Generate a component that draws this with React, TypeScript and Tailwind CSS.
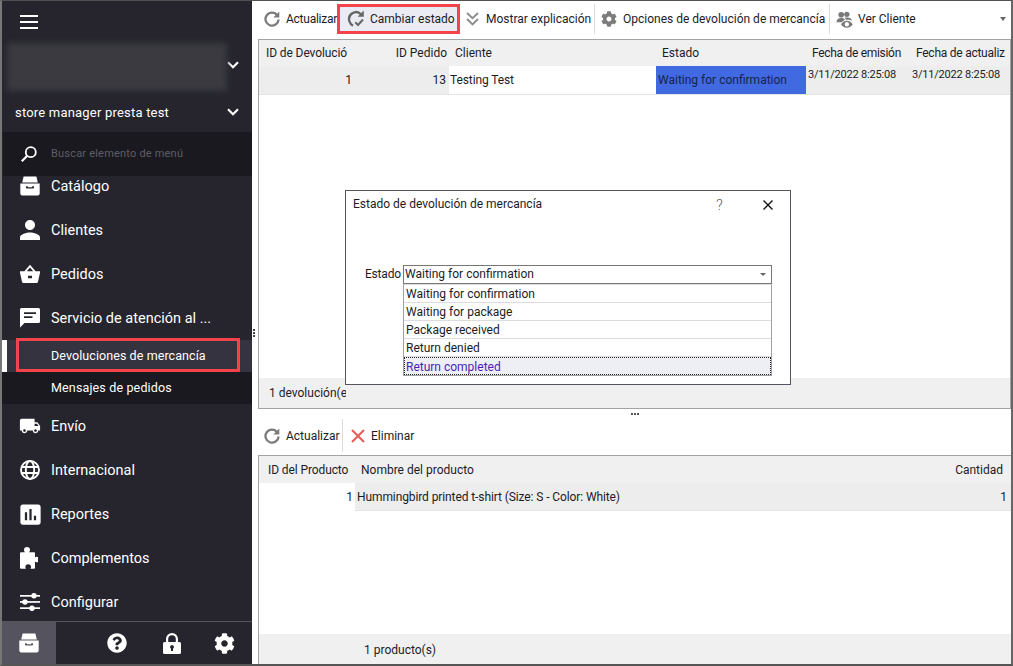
import React from "react";
import { MdPerson, MdLocalShipping, MdAssessment } from "react-icons/md";
import { FaCog, FaQuestionCircle } from "react-icons/fa";

const Archive = ({ className = "" }: { className?: string }) => (
  <svg viewBox="0 0 20 20" className={className} fill="currentColor">
    <path d="M3.600 0.600h12.800l1.400 6H2.200z" />
    <path fillRule="evenodd" d="M0.300 7.600h19.400v10a2 2 0 0 1-2 2H2.300a2 2 0 0 1-2-2zM6 10.200v1.400a1 1 0 0 0 1 1h6a1 1 0 0 0 1-1v-1.400h-1.800v1H7.800v-1z" />
  </svg>
);
const Basket = ({ className = "" }: { className?: string }) => (
  <svg viewBox="0 0 20 20" className={className} fill="currentColor">
    <path fillRule="evenodd" d="M10 0.800 L15.600 7.200H20v1.600l-2 9a1.600 1.600 0 0 1-1.600 1.200H3.600A1.600 1.600 0 0 1 2 17.800l-2-9V7.200h4.400zM6.800 7.200h6.400L10 3.400zM8 11.800v2.400h4v-2.400z" />
  </svg>
);
const Chat = ({ className = "" }: { className?: string }) => (
  <svg viewBox="0 0 20 20" className={className} fill="currentColor">
    <path fillRule="evenodd" d="M1.500 0h17A1.500 1.500 0 0 1 20 1.500v12a1.500 1.500 0 0 1-1.500 1.500H4.500L0 19.500V1.500A1.500 1.500 0 0 1 1.500 0zM4 4.200v1.800h12V4.200zM4 8.200V10h8.500V8.200z" />
  </svg>
);
const Globe = ({ className = "" }: { className?: string }) => (
  <svg viewBox="0 0 20 20" className={className} fill="none" stroke="currentColor" strokeWidth="1.900">
    <circle cx="10" cy="10" r="9" />
    <ellipse cx="10" cy="10" rx="4.200" ry="9" />
    <path d="M1.500 7h17M1.500 13h17" />
  </svg>
);
const Puzzle = ({ className = "" }: { className?: string }) => (
  <svg viewBox="0 0 18 22" className={className} fill="currentColor">
    <path d="M7 0a3 3 0 0 1 3 3c0 1-.500 1.600-1 2.200h5a1 1 0 0 1 1 1v4.300c.400-.400 1-.800 1.500-.800a2.500 2.500 0 0 1 0 5.600c-.500 0-1.100-.400-1.500-.800v6.300a1 1 0 0 1-1 1h-3.600c.400-.500.600-1.100.600-1.800a2.800 2.800 0 0 0-5.600 0c0 .700.200 1.300.600 1.800H1a1 1 0 0 1-1-1V6.200a1 1 0 0 1 1-1h4c-.500-.600-1-1.200-1-2.200a3 3 0 0 1 3-3z" />
  </svg>
);
const Sliders = ({ className = "" }: { className?: string }) => (
  <svg viewBox="0 0 20 20" className={className} fill="currentColor">
    <rect x="0" y="3" width="20" height="1.700" />
    <rect x="0" y="9.100" width="20" height="1.700" />
    <rect x="0" y="15.300" width="20" height="1.700" />
    <circle cx="14" cy="3.800" r="2.700" />
    <circle cx="5" cy="10" r="2.700" />
    <circle cx="12" cy="16.200" r="2.700" />
  </svg>
);
const Lock = ({ className = "" }: { className?: string }) => (
  <svg viewBox="0 0 18 21" className={className} fill="currentColor">
    <path fillRule="evenodd" d="M9 0a6 6 0 0 1 6 6v3h1.500A1.500 1.500 0 0 1 18 10.500v9a1.500 1.500 0 0 1-1.500 1.500h-15A1.500 1.500 0 0 1 0 19.500v-9A1.500 1.500 0 0 1 1.500 9H3V6a6 6 0 0 1 6-6zm0 2.200A3.800 3.800 0 0 0 5.200 6v3h7.600V6A3.800 3.800 0 0 0 9 2.200zM9 12a2 2 0 0 0-1 3.700V18h2v-2.300A2 2 0 0 0 9 12z" />
  </svg>
);
const Hamburger = () => (
  <svg viewBox="0 0 18 14" className="w-[18px] h-[14px]" fill="currentColor">
    <rect y="0" width="18" height="2" />
    <rect y="6" width="18" height="2" />
    <rect y="12" width="18" height="2" />
  </svg>
);
const Chevron = () => (
  <svg viewBox="0 0 12 8" className="w-3 h-2" fill="none" stroke="currentColor" strokeWidth="2.200">
    <path d="M1 1.200l5 5 5-5" />
  </svg>
);
const Search = () => (
  <svg viewBox="0 0 16 16" className="w-4 h-4" fill="none" stroke="currentColor" strokeWidth="1.800">
    <circle cx="9.800" cy="6.200" r="5" />
    <path d="M6 10L.8 15.200" strokeWidth="2.200" />
  </svg>
);
const Refresh = ({ className = "" }: { className?: string }) => (
  <svg viewBox="0 0 16 16" className={className} fill="none" stroke="#7c7c7c" strokeWidth="2.300">
    <path d="M13.200 4.200A6.500 6.500 0 1 0 14.500 8.500" />
    <path d="M15.300 0.600v6H9.300z" fill="#7c7c7c" stroke="none" />
  </svg>
);
const RefreshCheck = () => (
  <svg viewBox="0 0 18 18" className="w-[18px] h-[18px]" fill="none" stroke="#666" strokeWidth="2.300">
    <path d="M14 4.200A7 7 0 0 0 2.500 11.500 7 7 0 0 0 6 15.700" />
    <path d="M16.800 .6v6.200h-6.200z" fill="#666" stroke="none" />
    <path d="M8.300 12.300l2.700 2.700 5-5.500" strokeWidth="2" />
  </svg>
);
const DoubleDown = () => (
  <svg viewBox="0 0 13 14" className="w-[13px] h-[14px]" fill="none" stroke="#8c8c8c" strokeWidth="1.900">
    <path d="M1 1l5.500 5.200L12 1M1 7l5.500 5.500L12 7" />
  </svg>
);
const ViewUsers = () => (
  <svg viewBox="0 0 18 18" className="w-[17px] h-[17px]" fill="#7a7a7a">
    <circle cx="5.500" cy="4" r="3" />
    <circle cx="11.500" cy="3.500" r="2.800" />
    <path d="M0.500 12c0-3 2-4.500 5-4.500 1.500 0 3 .5 4 1.500l-3.500 3z" />
    <path d="M9 7h3c3 0 4.500 1.500 5 3.500-1.500-1-4-1.500-6-1z" />
    <path fillRule="evenodd" d="M11.500 10.200c2.800 0 5 1.700 6.200 3.800-1.200 2.100-3.400 3.800-6.200 3.800S6.500 16.100 5.300 14c1.200-2.100 3.400-3.800 6.200-3.800zm0 1.500a2.300 2.300 0 1 0 0 4.600 2.300 2.300 0 0 0 0-4.600z" />
  </svg>
);
const RedX = () => (
  <svg viewBox="0 0 14 14" className="w-[14px] h-[14px]" fill="none" stroke="#e8605a" strokeWidth="2.200">
    <path d="M1 1l12 12M13 1L1 13" />
  </svg>
);

const items = [
  { label: "Catálogo", Icon: Archive, size: "w-5 h-5", first: true },
  { label: "Clientes", Icon: MdPerson, size: "w-[30px] h-[30px] -mx-[5px]" },
  { label: "Pedidos", Icon: Basket, size: "w-5 h-5" },
  { label: "Servicio de atención al ...", Icon: Chat, size: "w-5 h-5" },
];
const items2 = [
  { label: "Envío", Icon: MdLocalShipping, size: "w-[22px] h-[22px] -mx-[1px]" },
  { label: "Internacional", Icon: Globe, size: "w-5 h-5" },
  { label: "Reportes", Icon: MdAssessment, size: "w-[27px] h-[27px] -mx-[3px]" },
  { label: "Complementos", Icon: Puzzle, size: "w-[18px] h-[22px]" },
  { label: "Configurar", Icon: Sliders, size: "w-5 h-5" },
];

function MenuItem({ label, Icon, size, first }: { label: string; Icon: any; size: string; first?: boolean }) {
  return (
    <div className={`h-[44px] shrink-0 flex items-center pl-[18px] text-[14.5px] text-white ${first ? "-mt-[12px]" : ""}`}>
      <span className="w-[31px] flex items-center">
        <Icon className={size} />
      </span>
      <span className="pt-[2px]">{label}</span>
    </div>
  );
}

export default function App() {
  return (
    <div
      className="relative w-[1013px] h-[666px] overflow-hidden bg-white border-t border-t-[#505050] border-l-2 border-l-[#777] border-r-2 border-r-[#666] border-b-2 border-b-[#555] flex text-[12px] text-[#1c1c28]"
      style={{ fontFamily: "Roboto, sans-serif" }}
    >
      {/* Sidebar */}
      <aside className="w-[250px] shrink-0 bg-[#26252e] text-white flex flex-col">
        <div className="h-[42px] shrink-0 flex items-center pl-[18px]">
          <Hamburger />
        </div>
        <div className="h-[48px] shrink-0 flex pl-[5px]">
          <div className="w-[221px] h-full bg-[#3a3a40] blur-[3px]" />
          <div className="ml-auto mr-[13px] mt-[18px] text-white">
            <Chevron />
          </div>
        </div>
        <div className="h-[41px] shrink-0 flex items-center pl-[13px] pr-[13px] text-[13px] tracking-[0.2px] text-white justify-between">
          <span className="pt-[3px]">store manager presta test</span>
          <Chevron />
        </div>
        <div className="h-[44px] shrink-0 bg-[#1a1920] ml-[1px] flex items-center pl-[18px] z-10">
          <Search />
          <span className="ml-[14px] text-[11px] tracking-[0.2px] text-[#5e5d64]">Buscar elemento de menú</span>
        </div>
        <div className="flex-1 min-h-0 overflow-hidden flex flex-col">
          {items.map((it) => (
            <MenuItem key={it.label} {...it} />
          ))}
          <div className="h-[32px] shrink-0 bg-[#34333f] flex items-center text-[12.5px] tracking-[0.08px] relative">
            <span className="w-[5px] h-full bg-white" />
            <span className="ml-[44px]">Devoluciones de mercancía</span>
            <span className="absolute left-[14px] -top-[2px] w-[224px] h-[34px] border-[3px] border-[#f5434b]" />
          </div>
          <div className="h-[32px] shrink-0 bg-[#1a1920] flex items-center pl-[49px] text-[12.5px] tracking-[0.15px]">Mensajes de pedidos</div>
          {items2.map((it) => (
            <MenuItem key={it.label} {...it} />
          ))}
        </div>
        <div className="h-[43px] shrink-0 border-t border-[#55545c] flex items-center text-white">
          <div className="w-[54px] h-full bg-[#55545e] flex items-center justify-center">
            <Archive className="w-5 h-5" />
          </div>
          <FaQuestionCircle className="ml-[51px] w-5 h-5" />
          <Lock className="ml-[36px] w-[18px] h-[21px]" />
          <FaCog className="ml-[33px] w-[21px] h-[21px]" />
        </div>
      </aside>

      {/* Main */}
      <main className="flex-1 min-w-0 flex flex-col relative">
        <div className="absolute left-[1px] top-[328px] flex flex-col gap-[1px]">
          <i className="w-[2px] h-[2px] bg-[#444]" />
          <i className="w-[2px] h-[2px] bg-[#444]" />
          <i className="w-[2px] h-[2px] bg-[#444]" />
        </div>
        <div className="h-[38px] shrink-0 pl-[6px] pt-[3px] pb-[5px] flex items-stretch">
          <div className="flex items-center pl-[6px] w-[79px] shrink-0">
            <Refresh className="w-4 h-4 shrink-0" />
            <span className="ml-[6px] whitespace-nowrap tracking-[-0.25px]">Actualizar</span>
          </div>
          <div className="flex items-center w-[123px] shrink-0 pl-[7px] bg-[#ebebf3] border-[3px] border-[#f5434b]">
            <RefreshCheck />
            <span className="ml-[5px] whitespace-nowrap">Cambiar estado</span>
          </div>
          <div className="flex items-center pl-[6px] w-[135px] shrink-0 border-r border-[#dcdcdc]">
            <DoubleDown />
            <span className="ml-[7px] whitespace-nowrap">Mostrar explicación</span>
          </div>
          <div className="flex items-center pl-[6px] w-[235px] shrink-0 border-r border-[#dcdcdc]">
            <FaCog className="w-[16px] h-[16px] text-[#7c7c7c]" />
            <span className="ml-[6px] whitespace-nowrap">Opciones de devolución de mercancía</span>
          </div>
          <div className="flex items-center pl-[6px] flex-1">
            <ViewUsers />
            <span className="ml-[5px] whitespace-nowrap">Ver Cliente</span>
            <span className="ml-auto mr-[5px] w-0 h-0 border-x-[3px] border-x-transparent border-t-[4px] border-t-[#666]" />
          </div>
        </div>

        {/* Top grid */}
        <section className="h-[370px] shrink-0 ml-[6px] border border-[#a4a4a4] flex flex-col">
          <div className="h-[26px] shrink-0 bg-[#f0f0f0] flex items-center">
            <span className="w-[133px] shrink-0 pl-[7px] whitespace-nowrap tracking-[-0.1px]">ID de Devolució</span>
            <span className="w-[57px] shrink-0 text-right pr-[2px] whitespace-nowrap">ID Pedido</span>
            <span className="w-[207px] shrink-0 pl-[6px]">Cliente</span>
            <span className="w-[150px] shrink-0 pl-[6px]">Estado</span>
            <span className="w-[104px] shrink-0 pl-[6px] whitespace-nowrap tracking-[-0.3px]">Fecha de emisión</span>
            <span className="pl-[6px] whitespace-nowrap tracking-[-0.25px]">Fecha de actualiz</span>
          </div>
          <div className="h-[29px] shrink-0 flex border-b border-[#e4e4e4]">
            <div className="w-[190px] shrink-0 bg-[#ededed] flex items-center">
              <span className="w-[93px] text-right">1</span>
              <span className="w-[95px] text-right pr-[1px]">13</span>
            </div>
            <div className="w-[207px] shrink-0 flex items-center pl-[1px] tracking-[-0.1px]">Testing Test</div>
            <div className="w-[150px] shrink-0 bg-[#4169e1] flex items-center pl-[2px] text-[#16234f]">Waiting for confirmation</div>
            <div className="flex-1 bg-[#ededed] flex pt-[1px] whitespace-nowrap text-[11px] tracking-[-0.2px]">
              <span className="w-[104px] shrink-0 pl-[2px]">3/11/2022 8:25:08</span>
              <span className="pl-[2px]">3/11/2022 8:25:08</span>
            </div>
          </div>
          <div className="flex-1" />
          <div className="h-[30px] shrink-0 bg-[#f0f0f0] flex items-center pl-[10px]">
            <span className="w-[77px] overflow-hidden whitespace-nowrap">1 devolución(es)</span>
          </div>
        </section>

        {/* Splitter */}
        <div className="h-[9px] shrink-0 flex justify-center items-center pl-[6px]">
          <span className="flex gap-[1px]">
            <i className="w-[2px] h-[2px] bg-[#555]" />
            <i className="w-[2px] h-[2px] bg-[#555]" />
            <i className="w-[2px] h-[2px] bg-[#555]" />
          </span>
        </div>

        {/* Lower toolbar */}
        <div className="h-[37px] shrink-0 pl-[12px] flex items-stretch pt-[1px] pb-[3px]">
          <div className="flex items-center w-[79px] border-r border-[#dcdcdc]">
            <Refresh className="w-4 h-4" />
            <span className="ml-[6px]">Actualizar</span>
          </div>
          <div className="flex items-center pl-[8px]">
            <RedX />
            <span className="ml-[6px]">Eliminar</span>
          </div>
        </div>

        {/* Lower grid */}
        <section className="flex-1 min-h-0 ml-[6px] border-t border-[#a4a4a4] border-l border-l-[#a4a4a4] flex flex-col">
          <div className="h-[27px] shrink-0 bg-[#f0f0f0] flex items-center">
            <span className="w-[96px] shrink-0 pl-[9px] whitespace-nowrap tracking-[-0.1px]">ID del Producto</span>
            <span className="pl-[6px]">Nombre del producto</span>
            <span className="ml-auto pr-[8px]">Cantidad</span>
          </div>
          <div className="h-[28px] shrink-0 flex">
            <div className="w-[96px] shrink-0 flex items-center justify-end pr-[2px]">1</div>
            <div className="flex-1 bg-[#ededed] flex items-center justify-between pl-[2px] pr-[4px] border-b border-[#e4e4e4]">
              <span className="tracking-[-0.1px]">Hummingbird printed t-shirt (Size: S - Color: White)</span>
              <span>1</span>
            </div>
          </div>
          <div className="flex-1" />
          <div className="h-[30px] shrink-0 bg-[#f0f0f0] flex items-center pl-[105px] pt-[1px]">1 producto(s)</div>
        </section>
      </main>

      {/* Dialog */}
      <div className="absolute left-[343px] top-[189px] w-[446px] h-[195px] bg-white border border-[#555560] z-20 flex flex-col">
        <div className="h-[62px] shrink-0 flex items-start pl-[7px] pt-[4px] relative">
          <span>Estado de devolución de mercancía</span>
          <span className="absolute left-[370px] top-[3px] text-[#666] text-[15px] font-light">?</span>
          <svg viewBox="0 0 10 10" className="absolute left-[417px] top-[9px] w-[10px] h-[10px]" fill="none" stroke="#111" strokeWidth="1.400">
            <path d="M.5.5l9 9M9.500.5l-9 9" />
          </svg>
        </div>
        <div className="flex ml-[57px] h-[20px] mt-[11px] shrink-0 items-center relative">
          <span className="absolute -left-[38px] tracking-[-0.2px]">Estado</span>
          <div className="w-[369px] h-[19px] border border-[#777] flex items-center pl-[1px] justify-between pr-[5px]">
            <span>Waiting for confirmation</span>
            <span className="w-0 h-0 border-x-[3px] border-x-transparent border-t-[3px] border-t-[#666]" />
          </div>
        </div>
        <div className="ml-[57px] w-[369px] border border-[#a0a0a0] border-t-[#ddd] flex flex-col">
          {["Waiting for confirmation", "Waiting for package", "Package received", "Return denied"].map((t) => (
            <div key={t} className="h-[18px] border-b border-[#dcdcdc] flex items-center pl-[2px] pt-[1px]">
              {t}
            </div>
          ))}
          <div className="h-[18px] flex items-center pl-[1px] pt-[1px] bg-[#eeeef5] border border-dotted border-[#222] text-[#4b1fb5]">Return completed</div>
        </div>
      </div>
    </div>
  );
}
